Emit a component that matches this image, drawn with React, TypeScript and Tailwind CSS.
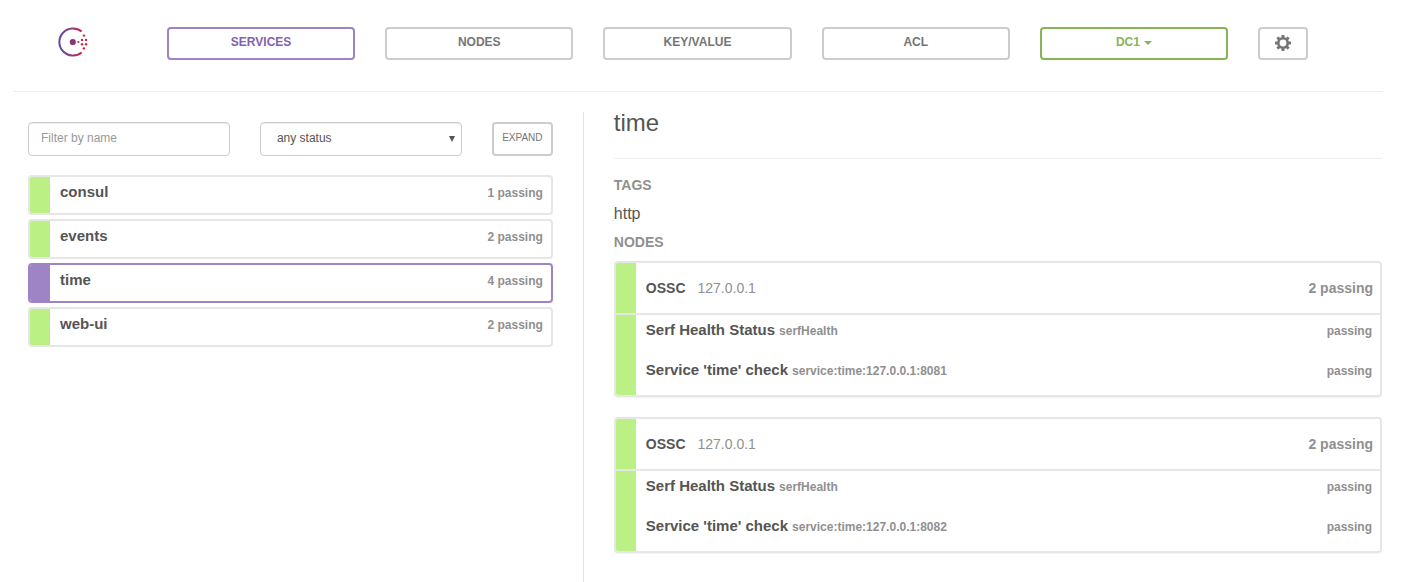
import { useState } from "react";

type Service = { name: string; passing: number };
type Check = { name: string; id: string };

const services: Service[] = [
  { name: "consul", passing: 1 },
  { name: "events", passing: 2 },
  { name: "time", passing: 4 },
  { name: "web-ui", passing: 2 },
];

const nodes: { name: string; address: string; checks: Check[] }[] = [
  {
    name: "OSSC",
    address: "127.0.0.1",
    checks: [
      { name: "Serf Health Status", id: "serfHealth" },
      { name: "Service 'time' check", id: "service:time:127.0.0.1:8081" },
    ],
  },
  {
    name: "OSSC",
    address: "127.0.0.1",
    checks: [
      { name: "Serf Health Status", id: "serfHealth" },
      { name: "Service 'time' check", id: "service:time:127.0.0.1:8082" },
    ],
  },
];

function Logo() {
  return (
    <svg viewBox="0 0 30 30" className="size-[30px]" aria-hidden="true">
      <defs>
        <linearGradient id="ring" gradientUnits="userSpaceOnUse" x1="1" y1="0" x2="25" y2="0">
          <stop offset="0" stopColor="#5c4ba3" />
          <stop offset="0.5" stopColor="#8a3a80" />
          <stop offset="1" stopColor="#d62040" />
        </linearGradient>
      </defs>
      <path d="M23.6 4.5 A13.6 13.6 0 1 0 23.6 25.5" fill="none" stroke="url(#ring)" strokeWidth="2" />
      <circle cx="14.8" cy="15" r="3.1" fill="#8c3576" />
      <circle cx="20.4" cy="15" r="1.1" fill="#b52b5c" />
      <g fill="#d2233f">
        <circle cx="25.9" cy="8.6" r="1.2" />
        <circle cx="24" cy="12.9" r="1.2" />
        <circle cx="28" cy="12.9" r="1.2" />
        <circle cx="24" cy="17.2" r="1.2" />
        <circle cx="28" cy="17.2" r="1.2" />
        <circle cx="25.9" cy="21.4" r="1.2" />
      </g>
    </svg>
  );
}

function Gear() {
  return (
    <svg viewBox="-8 -8 16 16" className="size-4" fill="#757575" aria-hidden="true">
      {[0, 45, 90, 135].map((a) => (
        <rect key={a} x="-1.5" y="-8" width="3" height="16" rx="0.5" transform={`rotate(${a})`} />
      ))}
      <circle r="6" />
      <circle r="3.4" fill="#fff" />
    </svg>
  );
}

const navBase =
  "flex h-[33px] min-w-0 flex-1 items-start justify-center rounded-[4px] border-2 pt-[5px] text-[12px] leading-4 font-bold uppercase";

function Header() {
  return (
    <header className="flex border-b border-[#eeeeee] pt-[27px] pr-[75px] pb-[31px] pl-[45px]">
      <a href="#" aria-label="Home" className="w-[109px] shrink-0">
        <Logo />
      </a>
      <nav className="flex min-w-0 flex-1 gap-[30px]">
        <a href="#services" className={`${navBase} border-[#9e84c5] text-[#8460b4]`}>Services</a>
        <a href="#nodes" className={`${navBase} border-[#cccccc] text-[#757575]`}>Nodes</a>
        <a href="#kv" className={`${navBase} border-[#cccccc] text-[#757575]`}>Key/Value</a>
        <a href="#acl" className={`${navBase} border-[#cccccc] text-[#757575]`}>ACL</a>
        <button type="button" className={`${navBase} gap-1 border-[#85b555] text-[#85b555]`}>
          DC1
          <svg viewBox="0 0 8 4" className="mt-[7px] h-1 w-2" fill="currentColor" aria-hidden="true">
            <path d="M0 0H8L4 4Z" />
          </svg>
        </button>
        <button
          type="button"
          aria-label="Settings"
          className="flex h-[33px] w-[50px] shrink-0 items-start justify-center rounded-[4px] border-2 border-[#cccccc] pt-[6px]"
        >
          <Gear />
        </button>
      </nav>
    </header>
  );
}

function ServiceList() {
  const [filter, setFilter] = useState("");
  const [selected, setSelected] = useState("time");
  return (
    <section className="w-5/12 border-r border-[#e2e2e2] pt-[10px] pr-[30px] pl-[15px]">
      <div className="grid grid-cols-[1fr_1fr_61px] gap-[30px]">
        <input
          type="text"
          aria-label="Filter by name"
          placeholder="Filter by name"
          value={filter}
          onChange={(e) => setFilter(e.target.value)}
          className="h-[34px] w-full min-w-0 rounded-[4px] border border-[#cccccc] px-3 pb-[3px] text-[12px] text-[#555555] shadow-[inset_0_1px_1px_rgba(0,0,0,0.075)] placeholder:text-[#999999]"
        />
        <div className="relative min-w-0">
          <select
            aria-label="Status"
            className="h-[34px] w-full appearance-none rounded-[4px] border border-[#cccccc] bg-white px-4 pb-[3px] text-[12px] text-[#555555] shadow-[inset_0_1px_1px_rgba(0,0,0,0.075)]"
          >
            <option>any status</option>
            <option>passing</option>
            <option>failing</option>
          </select>
          <svg viewBox="0 0 6 6" className="pointer-events-none absolute top-[14px] right-[7px] size-[6px]" fill="#555555" aria-hidden="true">
            <path d="M0 0H6L3 6Z" />
          </svg>
        </div>
        <button
          type="button"
          className="h-[34px] rounded-[4px] border-2 border-[#cccccc] pb-[3px] text-[10px] text-[#757575]"
        >
          EXPAND
        </button>
      </div>
      <ul className="mt-[19px] flex flex-col gap-1">
        {services
          .filter((s) => s.name.includes(filter))
          .map((s) => (
            <li key={s.name}>
              <button
                type="button"
                onClick={() => setSelected(s.name)}
                className={`flex h-10 w-full overflow-hidden rounded-[4px] border-2 ${
                  s.name === selected ? "border-[#9e84c5]" : "border-[#e6e6e6]"
                }`}
              >
                <span className={`h-full w-5 ${s.name === selected ? "bg-[#9e84c5]" : "bg-[#bbf085]"}`} />
                <span className="flex flex-1 items-baseline justify-between self-start pt-[5px] pr-2 pl-[10px] leading-5 font-bold">
                  <span className="text-[15px] text-[#555555]">{s.name}</span>
                  <span className="text-[12px] text-[#909090]">{s.passing} passing</span>
                </span>
              </button>
            </li>
          ))}
      </ul>
    </section>
  );
}

function Detail() {
  return (
    <section className="min-w-0 flex-1 pr-px pb-5 pl-[30px] text-[#555555]">
      <h1 className="border-b border-[#eeeeee] pb-6 text-[24px] leading-[22px]">time</h1>
      <h2 className="mt-4 text-[14px] leading-5 font-bold text-[#909090]">TAGS</h2>
      <p className="mt-[9px] text-[16px] leading-5">http</p>
      <h2 className="mt-2 text-[14px] leading-5 font-bold text-[#909090]">NODES</h2>
      <div className="mt-[9px] flex flex-col gap-5">
        {nodes.map((n, i) => (
          <article key={i} className="overflow-hidden rounded-[4px] border-2 border-[#e6e6e6] shadow-[0_1px_1px_rgba(0,0,0,0.05)]">
            <header className="flex h-[52px] items-stretch border-b-2 border-[#e6e6e6]">
              <span className="w-5 bg-[#bbf085]" />
              <div className="flex flex-1 items-center pr-[7px] pl-[10px] text-[14px]">
                <h3 className="font-bold">{n.name}</h3>
                <span className="ml-3 text-[#909090]">{n.address}</span>
                <span className="ml-auto font-bold text-[#909090]">{n.checks.length} passing</span>
              </div>
            </header>
            <div className="flex">
              <span className="w-5 bg-[#bbf085]" />
              <ul className="flex-1 pr-2 pl-[10px] font-bold">
                {n.checks.map((c) => (
                  <li key={c.id} className="flex h-10 items-baseline pt-[5px] leading-5">
                    <span className="text-[15px]">{c.name}</span>
                    <small className="ml-1 text-[12px] text-[#909090]">{c.id}</small>
                    <span className="ml-auto text-[12px] text-[#909090]">passing</span>
                  </li>
                ))}
              </ul>
            </div>
          </article>
        ))}
      </div>
    </section>
  );
}

export default function App() {
  return (
    <div className="flex min-h-screen flex-col bg-white pr-[35px] pl-[13px] font-['Liberation_Sans',Arial,sans-serif]">
      <Header />
      <main className="mt-5 flex flex-1">
        <ServiceList />
        <Detail />
      </main>
    </div>
  );
}
